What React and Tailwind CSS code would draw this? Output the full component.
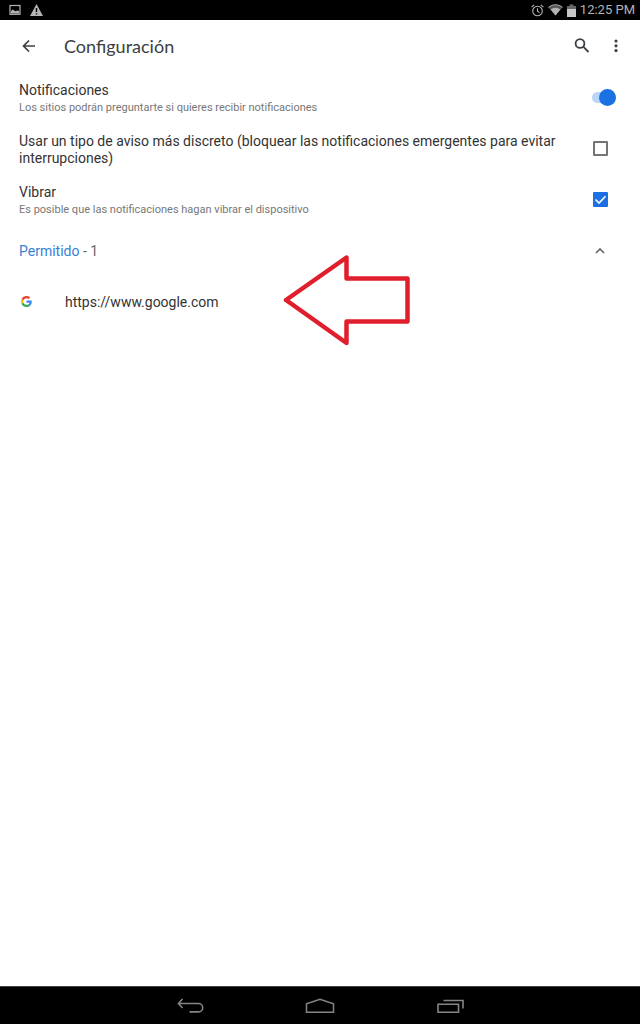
import React, { useState } from 'react';

function StatusBar() {
  return (
    <div className="flex h-5 items-center justify-between bg-black pr-[5px] pl-[9px] text-[#b4b4b4]">
      <div className="flex items-center gap-[9px]">
        <svg className="h-3 w-3" viewBox="0 0 12 12">
          <rect x="1" y="1.5" width="10" height="8.8" fill="none" stroke="currentColor" strokeWidth="1.2" />
          <path d="M2 9.5V7l2-1.5L6 7.2l3-.7 1 .8v2.2z" fill="currentColor" />
        </svg>
        <svg className="h-3 w-[13px]" viewBox="0 0 13 12">
          <path d="M6.5 0L13 12H0z" fill="currentColor" />
          <path d="M6.5 4v4M6.5 9.2v1.4" stroke="#000" strokeWidth="1.4" />
        </svg>
      </div>
      <div className="flex items-center gap-1">
        <svg className="h-[13px] w-[13px]" viewBox="0 0 13 13" fill="none" stroke="currentColor" strokeWidth="1.1">
          <circle cx="6.5" cy="7" r="4.8" />
          <path d="M6.5 4.2V7.3l2 1.3M.6 3.2L3.2.9M12.4 3.2L9.8.9" />
        </svg>
        <svg className="h-3 w-[15px]" viewBox="0 0 15 12">
          <path d="M.5 3.4C4.5-.1 10.5-.1 14.5 3.4L7.5 11.5z" fill="#555" />
          <path d="M2.7 5.5C5.5 3.3 9.5 3.3 12.3 5.5L7.5 11.5z" fill="currentColor" />
          <path d="M.5 3.4C4.5-.1 10.5-.1 14.5 3.4" fill="none" stroke="currentColor" />
        </svg>
        <svg className="h-[13px] w-[9px]" viewBox="0 0 9 13">
          <path d="M2.5.5h4V2H9v11H0V2h2.500z" fill="#666" />
          <path d="M0 5h9v8H0z" fill="#c8c8c8" />
        </svg>
        <span className="text-[13px] leading-5">12:25 PM</span>
      </div>
    </div>
  );
}

function AppBar() {
  return (
    <header className="flex h-[52px] items-center pr-4 pl-[21px] text-[#3c4043]">
      <button aria-label="Atrás" className="flex h-8 w-4 items-center justify-center">
        <svg className="h-4 w-4" viewBox="0 0 16 16" fill="none" stroke="currentColor" strokeWidth="1.7">
          <path d="M14 8H2.8M8 2.5L2.5 8L8 13.5" />
        </svg>
      </button>
      <h1 className="ml-[27px] flex-1 font-[Lato,sans-serif] text-[18px] leading-6">Configuración</h1>
      <button aria-label="Buscar" className="flex h-8 w-4 items-center justify-center">
        <svg className="h-4 w-4" viewBox="0 0 16 16" fill="none" stroke="currentColor" strokeWidth="1.8">
          <circle cx="6" cy="5.5" r="4.4" />
          <path d="M9.2 8.7L14.5 14" />
        </svg>
      </button>
      <button aria-label="Más opciones" className="ml-[18px] flex h-8 w-4 items-center justify-center">
        <svg className="h-4 w-4" viewBox="0 0 16 16" fill="currentColor">
          <circle cx="8" cy="3" r="1.6" />
          <circle cx="8" cy="7.8" r="1.6" />
          <circle cx="8" cy="12.6" r="1.6" />
        </svg>
      </button>
    </header>
  );
}

function SettingRow({ id, title, summary, children }) {
  return (
    <div className="flex h-[51px] items-center justify-between pr-6 pl-[19px]">
      <label htmlFor={id} className="max-w-[560px] flex-1 pt-0.5">
        <span className="block text-[14px] leading-[17px] text-[#333]">{title}</span>
        {summary && <span className="block text-[11px] leading-[17px] text-[#777]">{summary}</span>}
      </label>
      {children}
    </div>
  );
}

function Switch({ id, checked, onChange }) {
  return (
    <div className="relative flex h-[17px] w-6 items-center">
      <input
        id={id}
        type="checkbox"
        role="switch"
        checked={checked}
        onChange={onChange}
        className="peer h-[11px] w-6 appearance-none rounded-full bg-gray-300 checked:bg-[#bad5f8]"
      />
      <span className="pointer-events-none absolute left-0 h-[17px] w-[17px] rounded-full bg-gray-100 shadow peer-checked:right-0 peer-checked:left-auto peer-checked:bg-[#1b70e2] peer-checked:shadow-none" />
    </div>
  );
}

function Checkbox({ id, checked, onChange }) {
  return (
    <div className="flex w-8 justify-center">
      <div className="relative h-[15px] w-[15px]">
        <input
          id={id}
          type="checkbox"
          checked={checked}
          onChange={onChange}
          className="block h-[15px] w-[15px] appearance-none rounded-[1px] border-2 border-[#757575] checked:border-[#1b70e2] checked:bg-[#1b70e2]"
        />
        {checked && (
          <svg className="pointer-events-none absolute inset-0" viewBox="0 0 15 15" fill="none" stroke="#fff" strokeWidth="1.6">
            <path d="M2.5 7.5L6 11L12.5 4.3" />
          </svg>
        )}
      </div>
    </div>
  );
}

function GoogleLogo() {
  return (
    <svg className="h-[11px] w-[11px]" viewBox="0 0 48 48">
      <path fill="#EA4335" d="M24 9.5c3.54 0 6.71 1.22 9.21 3.6l6.85-6.85C35.9 2.38 30.47 0 24 0 14.62 0 6.51 5.38 2.56 13.22l7.98 6.19C12.43 13.72 17.74 9.5 24 9.5z" />
      <path fill="#4285F4" d="M46.98 24.55c0-1.57-.15-3.09-.38-4.55H24v9.02h12.94c-.58 2.96-2.26 5.48-4.78 7.18l7.73 6c4.51-4.18 7.09-10.36 7.09-17.65z" />
      <path fill="#FBBC05" d="M10.53 28.59A14.5 14.5 0 0 1 9.77 24c0-1.6.27-3.14.76-4.59l-7.98-6.19A23.9 23.9 0 0 0 0 24c0 3.88.92 7.54 2.56 10.78l7.97-6.19z" />
      <path fill="#34A853" d="M24 48c6.48 0 11.93-2.13 15.89-5.81l-7.73-6c-2.15 1.45-4.92 2.3-8.16 2.3-6.26 0-11.57-4.22-13.47-9.91l-7.98 6.19C6.51 42.62 14.62 48 24 48z" />
    </svg>
  );
}

function NavigationBar() {
  return (
    <nav className="flex h-[38px] justify-center border-t border-[#444] bg-black text-[#858585]">
      <button aria-label="Atrás" className="flex w-[130px] items-center justify-center">
        <svg className="h-4 w-7" viewBox="0 0 28 16" fill="none" stroke="currentColor" strokeWidth="1.6">
          <path d="M6.500 1L2.500 5.500L6.500 10M2.500 5.500H22.500a4.200 4.200 0 0 1 0 8.400H13.500" />
        </svg>
      </button>
      <button aria-label="Inicio" className="flex w-[130px] items-center justify-center">
        <svg className="h-4 w-[30px]" viewBox="0 0 30 16" fill="none" stroke="currentColor" strokeWidth="1.5">
          <path d="M1.5 14.3V5.8L15 1.2L28.5 5.8V14.3z" />
        </svg>
      </button>
      <button aria-label="Recientes" className="flex w-[130px] items-center justify-center">
        <svg className="h-4 w-7" viewBox="0 0 28 16" fill="none" stroke="currentColor" strokeWidth="1.6">
          <path d="M2 6.200H22.500v8H2zM7.500 2.500H27V10.500" />
        </svg>
      </button>
    </nav>
  );
}

function App() {
  const [notifications, setNotifications] = useState(true);
  const [quiet, setQuiet] = useState(false);
  const [vibrate, setVibrate] = useState(true);
  const [open, setOpen] = useState(true);

  return (
    <div className="flex min-h-screen flex-col bg-white font-[Roboto,sans-serif]">
      <StatusBar />
      <AppBar />

      <main className="flex-1">
        <SettingRow
          id="notifications"
          title="Notificaciones"
          summary="Los sitios podrán preguntarte si quieres recibir notificaciones"
        >
          <Switch id="notifications" checked={notifications} onChange={() => setNotifications(!notifications)} />
        </SettingRow>
        <SettingRow
          id="quiet"
          title="Usar un tipo de aviso más discreto (bloquear las notificaciones emergentes para evitar interrupciones)"
        >
          <Checkbox id="quiet" checked={quiet} onChange={() => setQuiet(!quiet)} />
        </SettingRow>
        <SettingRow
          id="vibrate"
          title="Vibrar"
          summary="Es posible que las notificaciones hagan vibrar el dispositivo"
        >
          <Checkbox id="vibrate" checked={vibrate} onChange={() => setVibrate(!vibrate)} />
        </SettingRow>

        <button
          aria-expanded={open}
          onClick={() => setOpen(!open)}
          className="flex h-[51px] w-full items-center justify-between pr-6 pl-[19px] text-[14px] leading-[17px] text-[#666]"
        >
          <span className="pt-0.5">
            <span className="text-[#3880d4]">Permitido</span> - 1
          </span>
          <span className="flex w-8 justify-center">
            <svg className="h-3 w-3" viewBox="0 0 12 12" fill="none" stroke="currentColor" strokeWidth="1.7">
              <path d={open ? 'M2 8L6 4L10 8' : 'M2 4L6 8L10 4'} />
            </svg>
          </span>
        </button>

        {/* Allowed sites */}
        {open && (
          <div className="relative flex h-[51px] items-center pl-[21px]">
            <GoogleLogo />
            <a href="https://www.google.com" className="ml-[33px] pt-0.5 text-[14px] leading-[17px] text-[#333]">
              https://www.google.com
            </a>
            <svg
              className="pointer-events-none absolute top-1/2 left-[282px] h-[94px] w-[130px] -translate-y-1/2"
              viewBox="0 0 130 94"
              fill="none"
              stroke="#e01f2d"
              strokeWidth="4.5"
              strokeLinejoin="round"
            >
              <path d="M4 45L64.500 2.500V23.500H125.500V66.500H64.500V88z" />
            </svg>
          </div>
        )}
      </main>

      <NavigationBar />
    </div>
  );
}

export default App;
